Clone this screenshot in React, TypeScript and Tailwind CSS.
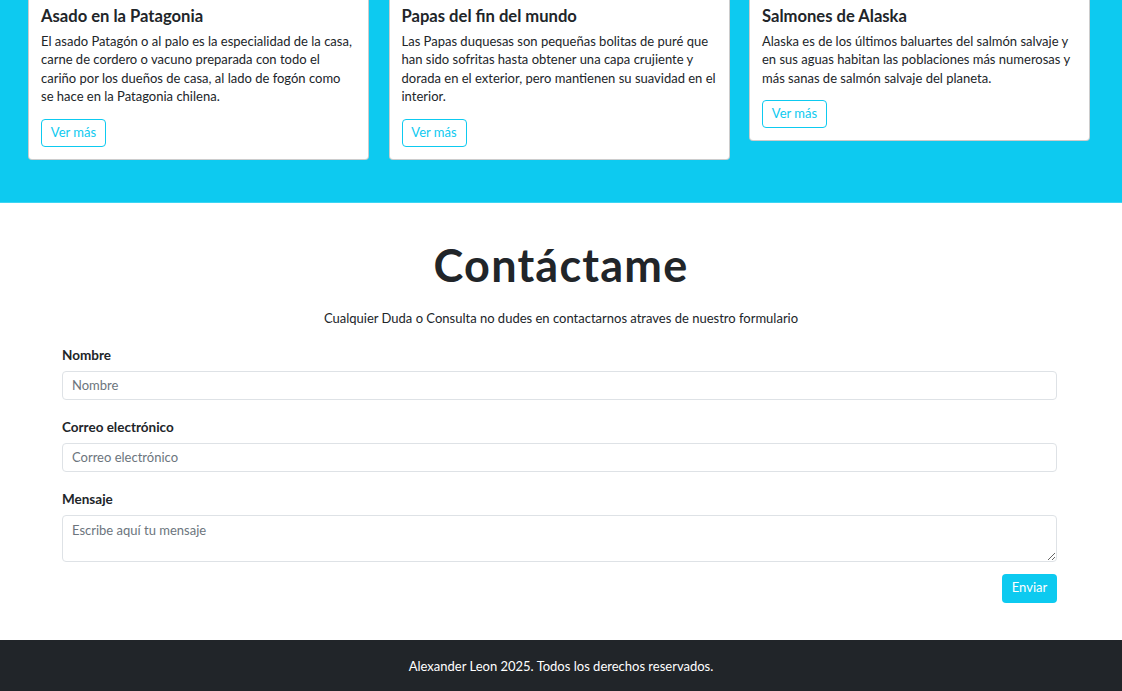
const cards = [
  {
    title: 'Asado en la Patagonia',
    text: 'El asado Patagón o al palo es la especialidad de la casa, carne de cordero o vacuno preparada con todo el cariño por los dueños de casa, al lado de fogón como se hace en la Patagonia chilena.',
  },
  {
    title: 'Papas del fin del mundo',
    text: 'Las Papas duquesas son pequeñas bolitas de puré que han sido sofritas hasta obtener una capa crujiente y dorada en el exterior, pero mantienen su suavidad en el interior.',
  },
  {
    title: 'Salmones de Alaska',
    text: 'Alaska es de los últimos baluartes del salmón salvaje y en sus aguas habitan las poblaciones más numerosas y más sanas de salmón salvaje del planeta.',
  },
];

export default function App() {
  return (
    <div className="min-h-[691px] bg-white text-[#212529]" style={{ fontFamily: 'Lato, "Noto Sans", sans-serif' }}>
      {/* platos */}
      <section className="bg-[#0dcaf0] pl-[28px] pr-[32px] pb-[42px] border-b border-[#3dd5f3]">
        <div className="grid grid-cols-3 items-start gap-x-[19.5px]">
          {cards.map((card) => (
            <div key={card.title} className="rounded-b-[4px] border border-t-0 border-black/20 bg-white px-[12px] pt-[7px] pb-[12px]">
              <h5 className="mb-[7px] text-[16.6px] font-bold leading-[18px]">{card.title}</h5>
              <p className="mb-[13px] text-[13px] leading-[18.4px] text-[#212529]">{card.text}</p>
              <button className="h-[28px] w-[65px] rounded-[4px] border border-[#0dcaf0] text-[13px] text-[#0dcaf0]">
                Ver más
              </button>
            </div>
          ))}
        </div>
      </section>

      {/* contacto */}
      <section className="pt-[37px] pb-[37px]">
        <h1 className="text-center text-[45px] font-bold leading-[50px] tracking-[1.2px]">Contáctame</h1>
        <p className="mt-[19px] text-center text-[13px] leading-[18px]">
          Cualquier Duda o Consulta no dudes en contactarnos atraves de nuestro formulario
        </p>
        <form className="ml-[62px] mt-[19px] flex w-[995px] flex-col" onSubmit={(e) => e.preventDefault()}>
          <label className="text-[13.5px] font-bold leading-[18px]">Nombre</label>
          <input
            placeholder="Nombre"
            className="mt-[7px] h-[29px] rounded-[4px] border border-[#dee2e6] px-[9px] text-[13px] outline-none placeholder:text-[#6c757d]"
          />
          <label className="mt-[18px] text-[13.5px] font-bold leading-[18px]">Correo electrónico</label>
          <input
            placeholder="Correo electrónico"
            className="mt-[7px] h-[29px] rounded-[4px] border border-[#dee2e6] px-[9px] text-[13px] outline-none placeholder:text-[#6c757d]"
          />
          <label className="mt-[18px] text-[13.5px] font-bold leading-[18px]">Mensaje</label>
          <textarea
            placeholder="Escribe aquí tu mensaje"
            className="mt-[7px] h-[47px] rounded-[4px] border border-[#dee2e6] px-[9px] py-[5px] text-[13px] leading-[18px] outline-none placeholder:text-[#6c757d]"
          />
          <div className="mt-[12px] flex justify-end">
            <button type="submit" className="h-[29px] w-[55px] rounded-[4px] bg-[#0dcaf0] text-[13px] text-white">
              Enviar
            </button>
          </div>
        </form>
      </section>

      <footer className="flex h-[51px] items-center justify-center bg-[#212529] pt-[3px] text-[13px] text-white">
        Alexander Leon 2025. Todos los derechos reservados.
      </footer>
    </div>
  );
}
